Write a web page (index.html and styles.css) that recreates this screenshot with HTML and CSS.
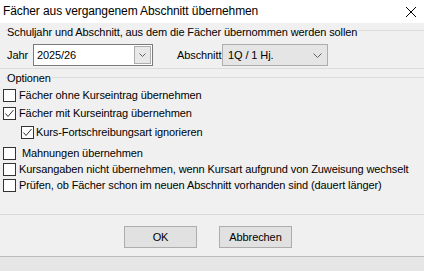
FILE: index.html
```html
<!DOCTYPE html>
<html lang="de">
<head>
  <meta charset="UTF-8">
  <meta name="viewport" content="width=device-width, initial-scale=1.0">
  <title>Fächer aus vergangenem Abschnitt übernehmen</title>
  <link rel="stylesheet" href="styles.css">
</head>
<body>
  <div class="window">
    <!-- Titelleiste -->
    <div class="titlebar">
      <span class="title">Fächer aus vergangenem Abschnitt übernehmen</span>
      <svg class="close" width="10" height="10" viewBox="0 0 10 10">
        <path d="M0 0L10 10M10 0L0 10" stroke="#000" stroke-width="1" fill="none"/>
      </svg>
    </div>

    <!-- Quelle -->
    <div class="group group-source">
      <div class="legend"><span>Schuljahr und Abschnitt, aus dem die Fächer übernommen werden sollen</span></div>
      <div class="field-row">
        <label class="lbl lbl-jahr">Jahr</label>
        <div class="combo combo-edit">
          <span class="combo-text">2025/26</span>
          <span class="combo-btn">
            <svg width="7" height="4" viewBox="0 0 7 4"><path d="M0.5 0.5L3.5 3.5L6.5 0.5" stroke="#606060" fill="none"/></svg>
          </span>
        </div>
        <label class="lbl lbl-abschnitt">Abschnitt</label>
        <div class="combo combo-list">
          <span class="combo-text">1Q / 1 Hj.</span>
          <svg class="chevron" width="9" height="5" viewBox="0 0 9 5"><path d="M0.5 0.5L4.5 4.5L8.5 0.5" stroke="#606060" fill="none"/></svg>
        </div>
      </div>
    </div>

    <!-- Optionen -->
    <div class="group group-options">
      <div class="legend"><span>Optionen</span></div>
      <div class="check c1"><span class="box"></span><span>Fächer ohne Kurseintrag übernehmen</span></div>
      <div class="check c2"><span class="box checked"><svg width="11" height="11" viewBox="0 0 11 11"><path d="M1.5 5.5L4 8.5L9.5 2" stroke="#333" fill="none"/></svg></span><span>Fächer mit Kurseintrag übernehmen</span></div>
      <div class="check c3 sub"><span class="box checked"><svg width="11" height="11" viewBox="0 0 11 11"><path d="M1.5 5.5L4 8.5L9.5 2" stroke="#333" fill="none"/></svg></span><span>Kurs-Fortschreibungsart ignorieren</span></div>
      <div class="check c4"><span class="box"></span><span class="pre"> Mahnungen übernehmen</span></div>
      <div class="check c5"><span class="box"></span><span>Kursangaben nicht übernehmen, wenn Kursart aufgrund von Zuweisung wechselt</span></div>
      <div class="check c6"><span class="box"></span><span>Prüfen, ob Fächer schon im neuen Abschnitt vorhanden sind (dauert länger)</span></div>
    </div>

    <!-- Schaltflächen -->
    <div class="buttons">
      <button class="btn">OK</button>
      <button class="btn">Abbrechen</button>
    </div>
    <div class="statusbar"></div>
  </div>
</body>
</html>
```

FILE: styles.css
```css
body {
  margin: 0;
  font-family: "Liberation Sans", Arial, sans-serif;
  font-size: 11px;
  letter-spacing: -0.1px;
  color: #000;
  background-color: #f0f0f0;
}
.window {
  width: 424px;
  height: 271px;
  display: flex;
  flex-direction: column;
  overflow: hidden;
}
.titlebar {
  height: 23px;
  line-height: 23px;
  background-color: #fff;
  display: flex;
  align-items: center;
  justify-content: space-between;
  padding: 0 8px 0 3px;
  flex: none;
}
.title {
  font-size: 12px;
  letter-spacing: -0.1px;
}
.legend {
  display: flex;
  height: 15px;
  line-height: 15px;
  margin-top: 2px;
  white-space: nowrap;
}
.legend::before {
  content: "";
  width: 2px;
  margin-left: 5px;
  border-top: 1px solid #dcdcdc;
  margin-top: 5px;
}
.legend::after {
  content: "";
  flex: 1;
  border-top: 1px solid #dcdcdc;
  margin-top: 5px;
  margin-left: 1px;
}
.group-source {
  border-bottom: 1px solid #dcdcdc;
  padding-bottom: 2px;
}
.group-options .legend::before,
.group-options .legend::after {
  margin-top: 6px;
}
.field-row {
  display: flex;
  align-items: center;
  margin-top: 4px;
  padding-left: 7px;
  height: 22px;
}
.lbl-jahr {
  width: 26px;
}
.lbl-abschnitt {
  margin-left: 24px;
  width: 45px;
}
.combo {
  height: 22px;
  box-sizing: border-box;
  display: flex;
  align-items: center;
}
.combo-edit {
  width: 120px;
  background-color: #fff;
  border: 1px solid #7a7a7a;
  padding-left: 3px;
}
.combo-btn {
  margin-left: auto;
  margin-right: 1px;
  width: 17px;
  height: 18px;
  box-sizing: border-box;
  border: 1px solid #adadad;
  background-color: #e8e8e8;
  display: flex;
  align-items: center;
  justify-content: center;
}
.combo-list {
  width: 106px;
  background-color: #e5e5e5;
  border: 1px solid #adadad;
  padding: 0 5px 0 5px;
}
.combo-list .chevron {
  margin-left: auto;
}
.check {
  display: flex;
  align-items: center;
  height: 13px;
  line-height: 13px;
  padding-left: 3px;
  white-space: nowrap;
}
.check.sub {
  padding-left: 21px;
}
.box {
  width: 13px;
  height: 13px;
  box-sizing: border-box;
  border: 1px solid #333;
  background-color: #fff;
  margin-right: 3px;
  flex: none;
  display: flex;
}
.check.sub .box {
  margin-right: 2px;
}
.pre {
  white-space: pre;
}
.c1 { margin-top: 3px; }
.c2 { margin-top: 5px; }
.c3 { margin-top: 6px; }
.c4 { margin-top: 8px; }
.c5 { margin-top: 3px; }
.c6 { margin-top: 3px; }
.buttons {
  margin-top: 22px;
  border-top: 1px solid #d9d9d9;
  border-bottom: 1px solid #bcbcbc;
  padding: 11px 0 8px 124px;
  display: flex;
  gap: 22px;
  flex: none;
}
.btn {
  width: 73px;
  height: 22px;
  box-sizing: border-box;
  border: 1px solid #adadad;
  background-color: #e1e1e1;
  font-family: inherit;
  font-size: 11px;
  letter-spacing: -0.1px;
  color: #000;
  padding: 0;
}
.statusbar {
  flex: 1;
  background-color: #e6e6e6;
}
```
